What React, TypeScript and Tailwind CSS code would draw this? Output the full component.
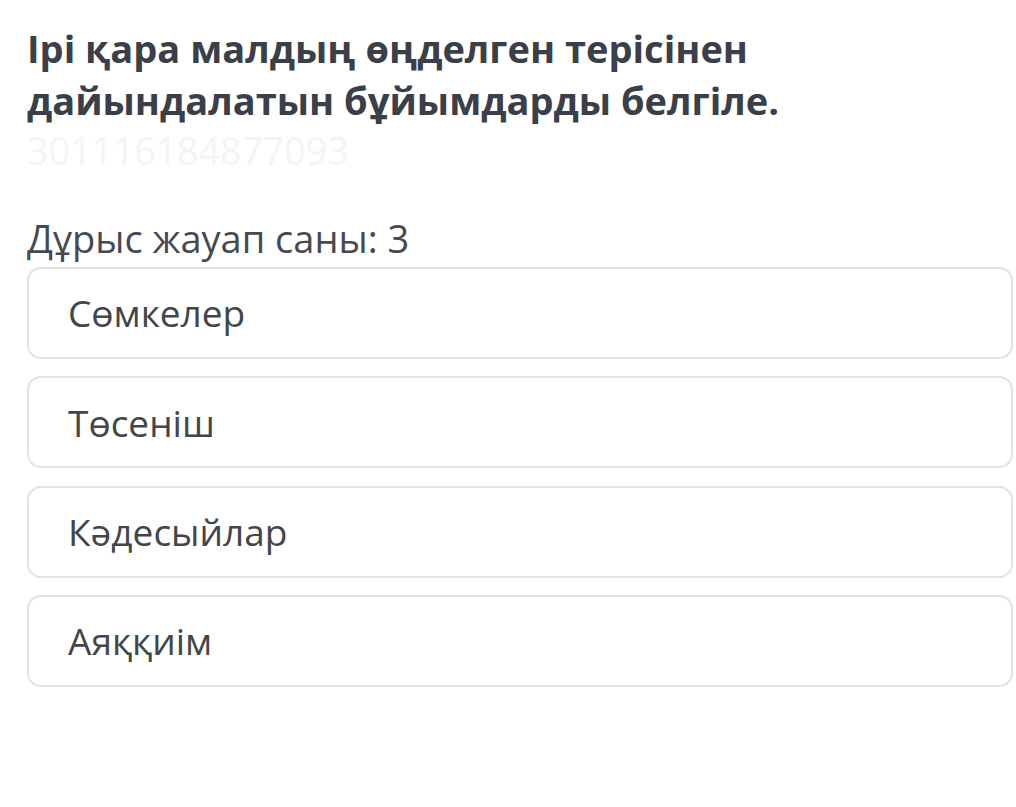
import React from "react";

const options = ["Сөмкелер", "Төсеніш", "Кәдесыйлар", "Аяққиім"];

export default function App() {
  return (
    <div
      className="w-[1016px] h-[807px] bg-white overflow-hidden"
      style={{ fontFamily: '"Open Sans", "Noto Sans", sans-serif' }}
    >
      <div className="pl-[27px] pr-[3px] pt-[22px]">
        <h1 className="text-[38px] leading-[52px] font-bold text-[#3b4048] w-[850px]">
          Ірі қара малдың өңделген терісінен дайындалатын бұйымдарды белгіле.
        </h1>
        <div className="text-[37.5px] leading-[50px] text-[#f4f4f4]">301116184877093</div>
        <div className="mt-[42px] text-[38px] leading-[40px] text-[#464a4e]">Дұрыс жауап саны: 3</div>
        <div className="mt-[9px] flex flex-col gap-[17.3px]">
          {options.map((o) => (
            <div
              key={o}
              className="h-[92px] border-[2.5px] border-[#e1e4e4] rounded-[14px] flex items-center pl-[39px] text-[37px] text-[#434648]"
            >
              {o}
            </div>
          ))}
        </div>
      </div>
    </div>
  );
}
